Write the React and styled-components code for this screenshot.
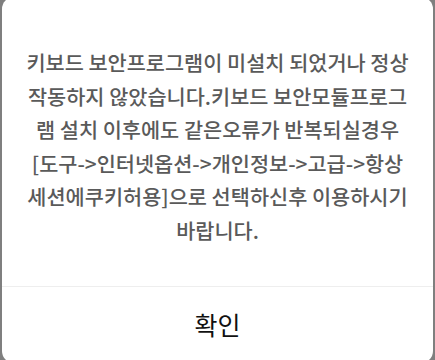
import React from "react";
import styled, { createGlobalStyle } from "styled-components";

const Global = createGlobalStyle`
  html, body {
    margin: 0;
    padding: 0;
    height: 360px;
    overflow: hidden;
    background: #7f7f7f;
  }
  * { box-sizing: border-box; }
`;

const Dialog = styled.div`
  margin: -3px 2px 0;
  height: 366px;
  background: #ffffff;
  border-radius: 12px;
  display: flex;
  flex-direction: column;
  overflow: hidden;
  font-family: "Noto Sans CJK KR", "Noto Sans", sans-serif;
`;

const Message = styled.div`
  flex: 1;
  margin: 0;
  padding: 49px 8px 0;
  text-align: center;
  font-size: 20.8px;
  font-weight: 500;
  line-height: 33.6px;
  color: #5a5a5a;
`;

const Line = styled.span`
  display: block;
  white-space: nowrap;
`;

const Footer = styled.div`
  height: 77px;
  border-top: 1px solid #eeeeee;
  display: flex;
  align-items: center;
  justify-content: center;
`;

const ConfirmButton = styled.button`
  border: 0;
  background: transparent;
  padding: 0;
  font-family: "Noto Sans CJK KR", sans-serif;
  font-size: 25px;
  color: #111111;
  cursor: pointer;
  margin-top: -2px;
`;

const lines = [
  "키보드 보안프로그램이 미설치 되었거나 정상",
  "작동하지 않았습니다.키보드 보안모듈프로그",
  "램 설치 이후에도 같은오류가 반복되실경우",
  "[도구->인터넷옵션->개인정보->고급->항상",
  "세션에쿠키허용]으로 선택하신후 이용하시기",
  "바랍니다.",
];

export default function App() {
  return (
    <>
      <Global />
      <Dialog role="dialog">
        <Message>
          {lines.map((l) => (
            <Line key={l}>{l}</Line>
          ))}
        </Message>
        <Footer>
          <ConfirmButton>확인</ConfirmButton>
        </Footer>
      </Dialog>
    </>
  );
}
